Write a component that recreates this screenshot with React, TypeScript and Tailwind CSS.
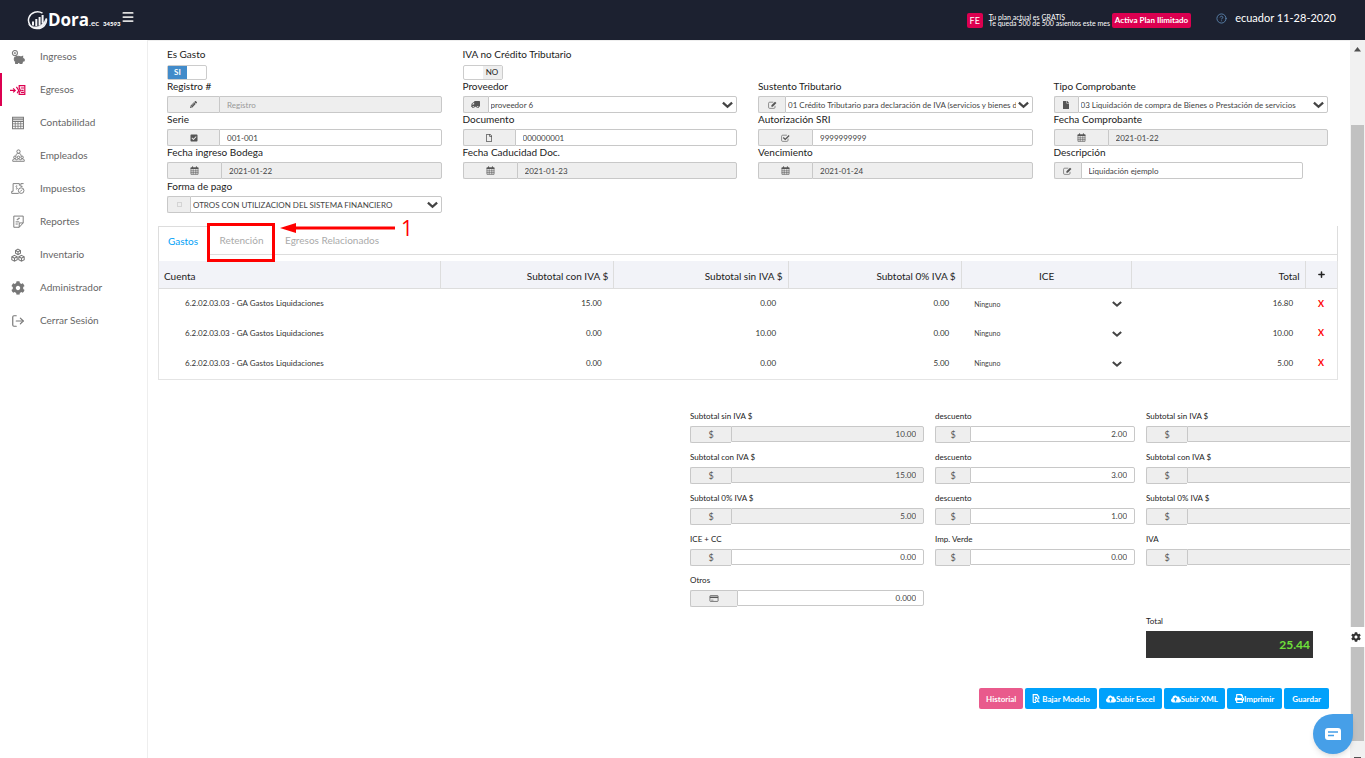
import { useState, type ReactNode } from "react";
import {
  FaCheckSquare,
  FaCloudUploadAlt,
  FaCog,
  FaFile,
  FaPencilAlt,
  FaPrint,
  FaRegFile,
  FaTruck,
} from "react-icons/fa";
import { CircleHelp, LogOut, Menu, Plus } from "lucide-react";

const svgLine = {
  viewBox: "0 0 18 18",
  fill: "none",
  stroke: "currentColor",
  strokeWidth: 1.3,
} as const;

/* ---------- Icons ---------- */

function LogoMark() {
  return (
    <svg viewBox="0 0 22 20" className="w-[22px] h-5 shrink-0" fill="none" stroke="#f4f5f7">
      <path d="M16.5 3.2A9 8.4 0 1 0 20.3 8.5" strokeWidth="1.5" />
      <path d="M2.5 14.5C7 18.5 16 18 20 8.5 20.5 15 15.500 18.600 11 18.600 7 18.600 4 17 2.500 14.500Z" fill="#f4f5f7" strokeWidth="0.500" />
      <path d="M7 15.500v-4M10.300 16V9M13.600 15.500V7M16.600 13.500V5" strokeWidth="2" />
    </svg>
  );
}

function CalendarIcon() {
  return (
    <svg viewBox="0 0 14 14" className="w-[9px] h-[9px]" fill="none" stroke="currentColor">
      <path d="M1.500 3h11v10h-11Z" />
      <path d="M1 3.500h12" strokeWidth="2.500" />
      <path d="M4 .5v3M10 .5v3" strokeWidth="1.500" />
      <path d="M5 5v8M9 5v8M1 7.500h12M1 10.300h12" strokeWidth="0.900" />
    </svg>
  );
}

function EditIcon() {
  return (
    <svg viewBox="0 0 16 14" className="w-[9px] h-2" fill="none" stroke="currentColor" strokeWidth="1.1">
      <path d="M12.500 8.500V11a2 2 0 0 1-2 2H3a2 2 0 0 1-2-2V4a2 2 0 0 1 2-2h6.500" />
      <path d="M6 10V7.500L12.500 1 15 3.500 8.500 10Z" fill="currentColor" stroke="none" />
    </svg>
  );
}

function CheckIcon() {
  return (
    <svg viewBox="0 0 16 14" className="w-[9px] h-2" fill="none" stroke="currentColor" strokeWidth="1.1">
      <path d="M12.500 8V11a2 2 0 0 1-2 2H3a2 2 0 0 1-2-2V4a2 2 0 0 1 2-2h7.500" />
      <path d="M4 6l3.500 3.500L14.500 2.500" strokeWidth="2.200" />
    </svg>
  );
}

function CardIcon() {
  return (
    <svg viewBox="0 0 16 12" className="w-[10px] h-[7px]" fill="none" stroke="currentColor" strokeWidth="1.3">
      <rect x="1" y="1" width="14" height="10" rx="1" />
      <path d="M1 4h14" strokeWidth="2.500" />
      <path d="M3 8.800h4" strokeWidth="1" />
    </svg>
  );
}

function SquareIcon() {
  return <span className="w-[5px] h-[5px] border border-[#d4d4d4]" />;
}

function PiggyIcon() {
  return (
    <svg {...svgLine} className="w-[14px] h-[14px]">
      <circle cx="5" cy="4" r="3.300" />
      <path d="M5 2.500v3M3.500 4h3" strokeWidth="1" />
      <path d="M5 9.500C7 8 11 8 13 9l2-1v2.500l2 1.500v2l-2 .5-1 3h-2.500V16h-3v1.500H6l-.5-3C4 13 4 11 5 9.500Z" fill="currentColor" />
    </svg>
  );
}

function ExpenseIcon() {
  return (
    <svg viewBox="0 0 20 16" className="w-4 h-[14px]" fill="none" stroke="currentColor" strokeWidth="1.500">
      <path d="M0 8.500h6M4 6l2.500 2.500L4 11M8 4l3 4.500L9 12" />
      <path d="M11.500 2.500h7v11h-7V11l1.500-2.500-1.500-3Z" />
      <path d="M13.500 5.500h4M14 8.500h3M13.500 11h4" />
    </svg>
  );
}

function CalculatorIcon() {
  return (
    <svg {...svgLine} className="w-[14px] h-[14px]">
      <path d="M2 1.500h14v15H2Z" />
      <path d="M2 4h14M2 6.800h14" strokeWidth="1.600" />
      <path d="M5.500 7v9M9 7v9M12.500 7v9M2 10h14M2 13.200h14" strokeWidth="1" />
    </svg>
  );
}

function PeopleIcon() {
  return (
    <svg {...svgLine} className="w-[13px] h-[13px]">
      <circle cx="9" cy="3.500" r="2.300" />
      <path d="M5.500 10V8.500c0-3 7-3 7 0V10" />
      <circle cx="4" cy="11.500" r="1.700" />
      <circle cx="9" cy="11.500" r="1.700" />
      <circle cx="14" cy="11.500" r="1.700" />
      <path d="M1 17v-1.500c0-2.500 5-2.500 5.300 0 .4-2.500 5-2.500 5.400 0 .3-2.500 5.300-2.500 5.300 0V17Z" />
    </svg>
  );
}

function TaxIcon() {
  return (
    <svg {...svgLine} viewBox="0 0 20 18" className="w-[14px] h-[13px]">
      <path d="M3 13V2h9M3 13H1v3h10M12 2v3" />
      <path d="M9 5.500C6.500 4.500 6.500 7 8 7.500s1.500 3-1 2" />
      <path d="M18 2h-4v4h2.500" />
      <circle cx="14.500" cy="12" r="4" />
      <path d="M13 13.500l3-3" />
    </svg>
  );
}

function ReportIcon() {
  return (
    <svg {...svgLine} className="w-[13px] h-[13px]">
      <path d="M10 17H2.500V1.500h13V11ZM10 17v-6h5.500" />
      <path d="M11 4.500H8.500v2h-2M5 9.500h5M5 12.500h3" />
    </svg>
  );
}

function BoxesIcon() {
  return (
    <svg {...svgLine} className="w-[14px] h-[14px]">
      <path d="M9 1.500l3.200 1.700v3.600L9 8.500 5.800 6.800V3.200ZM5.800 3.200 9 5l3.200-1.800M9 5v3.500" />
      <path d="M4.500 9.500l3.500 1.700V15l-3.500 2L1 15v-3.800ZM1 11.200l3.500 2L8 11.200M4.500 13.200V17" />
      <path d="M13.500 9.500l3.500 1.700V15l-3.500 2-3.500-2v-3.800ZM10 11.200l3.500 2 3.500-2M13.500 13.200V17" />
    </svg>
  );
}

function ModelIcon() {
  return (
    <svg viewBox="0 0 14 16" className="w-2 h-[9px]" fill="none" stroke="currentColor" strokeWidth="2">
      <path d="M2 15V1h7l3 4v4M5 6h4M2 15h5" />
      <circle cx="8" cy="10.500" r="2.500" />
      <path d="M10 12.500l3 2.500" />
    </svg>
  );
}

function Chevron({ className }: { className: string }) {
  return (
    <svg viewBox="0 0 12 8" className={`pointer-events-none absolute top-1/2 -translate-y-1/2 ${className}`} fill="none" stroke="#444" strokeWidth="2.500">
      <path d="M1 1.500l5 4.500 5-4.500" />
    </svg>
  );
}

/* ---------- Data ---------- */

const nav = [
  { label: "Ingresos", icon: <PiggyIcon /> },
  { label: "Egresos", icon: <ExpenseIcon /> },
  { label: "Contabilidad", icon: <CalculatorIcon /> },
  { label: "Empleados", icon: <PeopleIcon /> },
  { label: "Impuestos", icon: <TaxIcon /> },
  { label: "Reportes", icon: <ReportIcon /> },
  { label: "Inventario", icon: <BoxesIcon /> },
  { label: "Administrador", icon: <FaCog size={14} /> },
  { label: "Cerrar Sesión", icon: <LogOut size={14} strokeWidth={2} /> },
];

const rows = [
  { con: "15.00", sin: "0.00", cero: "0.00", total: "16.80" },
  { con: "0.00", sin: "10.00", cero: "0.00", total: "10.00" },
  { con: "0.00", sin: "0.00", cero: "5.00", total: "5.00" },
];

const totals = [
  { left: "Subtotal sin IVA $", value: "10.00", mid: "descuento", midValue: "2.00", right: "Subtotal sin IVA $", locked: true },
  { left: "Subtotal con IVA $", value: "15.00", mid: "descuento", midValue: "3.00", right: "Subtotal con IVA $", locked: true },
  { left: "Subtotal 0% IVA $", value: "5.00", mid: "descuento", midValue: "1.00", right: "Subtotal 0% IVA $", locked: true },
  { left: "ICE + CC", value: "0.00", mid: "Imp. Verde", midValue: "0.00", right: "IVA", locked: false },
];

/* ---------- Form pieces ---------- */

type FieldProps = {
  id: string;
  label: string;
  icon: ReactNode;
  addon: string;
  value?: string;
  placeholder?: string;
  locked?: boolean;
  select?: boolean;
  width?: string;
};

function Field({ id, label, icon, addon, value, placeholder, locked, select, width = "w-full" }: FieldProps) {
  return (
    <div className="pl-[10px] pr-[11px] min-w-0">
      <label htmlFor={id} className="block h-4 text-[10px] leading-3 text-[#222]">{label}</label>
      <div className={`flex h-[17px] ${width}`}>
        <span className={`flex items-center justify-center shrink-0 border border-r-0 border-[#c8c8c8] rounded-l-xs bg-[#eee] text-[#555] ${addon}`}>
          {icon}
        </span>
        {select ? (
          <div className="relative flex-1 min-w-0">
            <select id={id} className="block w-full h-full appearance-none border border-[#c8c8c8] rounded-r-xs bg-white pl-[2px] pr-4 text-[8px] leading-[14px] text-[#444]">
              <option>{value}</option>
            </select>
            <Chevron className="right-1 w-[11px] h-2" />
          </div>
        ) : (
          <input
            id={id}
            defaultValue={value}
            placeholder={placeholder}
            readOnly={locked}
            className={`flex-1 min-w-0 border border-[#c8c8c8] rounded-r-xs px-[7px] text-[8px] text-[#444] placeholder:text-[#999] ${locked ? "bg-[#eee]" : "bg-white"}`}
          />
        )}
      </div>
    </div>
  );
}

function Amount({ id, label, value, locked, addon, icon = "$" }: { id: string; label: string; value?: string; locked?: boolean; addon: string; icon?: ReactNode }) {
  return (
    <div className="h-[41px] min-w-0">
      <label htmlFor={id} className="block h-4 text-[8px] leading-3 text-[#222]">{label}</label>
      <div className="flex h-[17px]">
        <span className={`flex items-center justify-center shrink-0 border border-r-0 border-[#c8c8c8] rounded-l-xs bg-[#eee] text-[9px] text-[#555] ${addon}`}>
          {icon}
        </span>
        <input
          id={id}
          defaultValue={value}
          readOnly={locked}
          className={`flex-1 min-w-0 h-4 border border-[#c8c8c8] rounded-r-xs px-[7px] text-right text-[8px] text-[#444] ${locked ? "bg-[#eee]" : "bg-white"}`}
        />
      </div>
    </div>
  );
}

function Toggle({ id, label, initial }: { id: string; label: string; initial: boolean }) {
  const [on, setOn] = useState(initial);
  return (
    <div className="pl-[10px] pr-[11px]">
      <label htmlFor={id} className="block h-4 text-[10px] leading-3 text-[#222]">{label}</label>
      <button
        id={id}
        type="button"
        role="switch"
        aria-checked={on}
        onClick={() => setOn(!on)}
        className="mt-px flex w-10 h-[15px] border border-[#ccc] rounded-xs bg-white text-[8px] leading-[13px]"
      >
        {on && <span className="w-[19px] bg-[#428bca] font-bold text-white">SI</span>}
        {!on && <span className="ml-auto w-[19px] bg-[#eee] text-[#222]">NO</span>}
      </button>
    </div>
  );
}

/* ---------- Layout ---------- */

function Header() {
  return (
    <header className="flex items-center h-10 shrink-0 bg-[#1c2130] text-white pl-[26px] pr-[29px]">
      <LogoMark />
      <div className="flex items-baseline">
        <span className="text-[17px] leading-5 font-bold font-['Open_Sans',sans-serif]">Dora</span>
        <span className="text-[8px] font-semibold">.ec</span>
        <span className="ml-1 text-[6px] font-black">34593</span>
      </div>
      <button type="button" aria-label="Menú" className="pb-[7px]">
        <Menu size={14} strokeWidth={3} className="text-[#ddd]" />
      </button>
      <div className="ml-auto flex items-center">
        <span className="h-[15px] px-[3px] rounded-xs bg-[#dc0050] text-[9px] leading-[15px]">FE</span>
        <p className="ml-[6px] w-[123px] text-[7px] leading-[6px]">
          Tu plan actual es GRATIS
          <br />
          Te queda 500 de 500 asientos este mes
        </p>
        <button type="button" className="h-[15px] px-[3px] rounded-xs bg-[#dc0050] text-[8px] leading-[15px] font-bold">
          Activa Plan Ilimitado
        </button>
        <div className="ml-[25px] mb-1 flex items-center gap-2">
          <CircleHelp size={11} className="text-[#5b83ad]" />
          <span className="text-[11px]">ecuador 11-28-2020</span>
        </div>
      </div>
    </header>
  );
}

function Sidebar() {
  return (
    <aside className="w-[148px] shrink-0 border-r border-[#eee] bg-white">
      <nav>
        {nav.map(({ label, icon }) => {
          const active = label === "Egresos";
          return (
            <a
              key={label}
              href="#"
              className={`flex items-center h-[33px] border-l-2 text-[10px] text-[#666] ${active ? "border-[#dc0050]" : "border-transparent"}`}
            >
              <span className={`flex justify-center w-8 mr-[6px] ${active ? "text-[#dc0050]" : "text-[#777]"}`}>{icon}</span>
              {label}
            </a>
          );
        })}
      </nav>
    </aside>
  );
}

function Tabs() {
  return (
    <div className="relative mx-[1px] flex h-[35px] border-x border-[#ddd] text-[10px]" role="tablist">
      <div className="flex flex-1 h-[29px] border-b border-[#ddd]">
        <button type="button" role="tab" aria-selected="true" className="-mb-px w-[49px] border-t border-r border-[#ddd] bg-white text-[#00a1f7]">
          Gastos
        </button>
        <button type="button" role="tab" className="w-[67px] text-[#aaa]">Retención</button>
        <button type="button" role="tab" className="px-[10px] text-[#aaa]">Egresos Relacionados</button>
      </div>

      {/* Step marker over the tab */}
      <div className="pointer-events-none absolute left-[48px] -top-[3px] w-[68px] h-[39px] border-[3px] border-[#f00]" />
      <svg viewBox="0 0 118 10" className="absolute left-[121px] -top-[3px] w-[118px] h-[10px]" fill="#f00">
        <path d="M0 5 16 0v3.500h99v3H16V10Z" />
      </svg>
      <span className="absolute left-[242px] -top-3 text-[21px] leading-7 text-[#f00] font-['Open_Sans',sans-serif]">1</span>
    </div>
  );
}

function ExpensesTable() {
  const th = "h-[27px] border-r border-[#ddd] px-[5px] pt-1 font-normal";
  return (
    <div className="mx-[1px] border border-t-0 border-[#e4e4e4] pb-px">
      <table className="w-full table-fixed border-collapse text-[8px] text-[#333]">
        <colgroup>
          <col className="w-[23.9%]" />
          <col className="w-[14.7%]" />
          <col className="w-[14.8%]" />
          <col className="w-[14.7%]" />
          <col className="w-[14.5%]" />
          <col className="w-[14.7%]" />
          <col className="w-[2.7%]" />
        </colgroup>
        <thead className="border-b border-[#ddd] bg-[#f2f3f8] text-[10px] text-[#222]">
          <tr>
            <th className={`${th} text-left`}>Cuenta</th>
            <th className={`${th} text-right`}>Subtotal con IVA $</th>
            <th className={`${th} text-right`}>Subtotal sin IVA $</th>
            <th className={`${th} text-right`}>Subtotal 0% IVA $</th>
            <th className={`${th} text-center`}>ICE</th>
            <th className={`${th} text-right`}>Total</th>
            <th className="p-0">
              <button type="button" aria-label="Agregar fila" className="block mx-auto">
                <Plus size={9} strokeWidth={4} />
              </button>
            </th>
          </tr>
        </thead>
        <tbody>
          {rows.map((row, i) => (
            <tr key={i} className="h-[30px]">
              <td className="pl-[26px]">6.2.02.03.03 - GA Gastos Liquidaciones</td>
              <td className="pr-3 text-right">{row.con}</td>
              <td className="pr-3 text-right">{row.sin}</td>
              <td className="pr-3 text-right">{row.cero}</td>
              <td className="pl-[13px] pr-[10px] pt-px">
                <div className="relative">
                  <select aria-label="ICE" className="block w-full appearance-none text-[7px] text-[#444]">
                    <option>Ninguno</option>
                  </select>
                  <Chevron className="right-0 w-[10px] h-[7px]" />
                </div>
              </td>
              <td className="pr-3 text-right">{row.total}</td>
              <td className="text-center">
                <button type="button" aria-label="Eliminar fila" className="text-[9px] font-bold text-[#f00]">X</button>
              </td>
            </tr>
          ))}
        </tbody>
      </table>
    </div>
  );
}

function Totals() {
  return (
    <div className="ml-[45.1%] mt-[30px] w-[57.4%]">
      <div className="grid grid-cols-[234fr_200fr_234fr] gap-x-[11px]">
        {totals.map((t, i) => (
          <div key={i} className="contents">
            <Amount id={`left-${i}`} label={t.left} value={t.value} locked={t.locked} addon="w-[41px]" />
            <Amount id={`mid-${i}`} label={t.mid} value={t.midValue} addon="w-[35px]" />
            <Amount id={`right-${i}`} label={t.right} locked addon="w-[41px]" />
          </div>
        ))}
        <Amount id="otros" label="Otros" value="0.000" addon="w-[47px]" icon={<CardIcon />} />
        <div className="col-start-3 row-start-6">
          <label htmlFor="total" className="block h-4 text-[8px] leading-3 text-[#222]">Total</label>
          <input
            id="total"
            readOnly
            defaultValue="25.44"
            className="block w-[167px] h-[27px] bg-[#333] px-[3px] text-right text-[12px] font-bold text-[#6fe03a]"
          />
        </div>
      </div>
    </div>
  );
}

function Actions() {
  const btn = "flex items-center h-[21px] rounded-xs bg-[#00a1fb] font-bold";
  return (
    <div className="flex justify-end gap-[2px] mt-[30px] pr-[21px] text-[8px] text-white">
      <button type="button" className={`${btn} bg-[#e95a8c] px-[7px]`}>Historial</button>
      <button type="button" className={`${btn} gap-[2px] px-[7px]`}><ModelIcon />Bajar Modelo</button>
      <button type="button" className={`${btn} px-[7px]`}><FaCloudUploadAlt size={10} />Subir Excel</button>
      <button type="button" className={`${btn} px-[7px]`}><FaCloudUploadAlt size={10} />Subir XML</button>
      <button type="button" className={`${btn} px-2`}><FaPrint size={9} />Imprimir</button>
      <button type="button" className={`${btn} px-2`}>Guardar</button>
    </div>
  );
}

function ScrollRail() {
  return (
    <div className="flex flex-col w-[15px] shrink-0 bg-[#f1f1f1]" aria-hidden="true">
      <svg viewBox="0 0 15 20" className="w-[15px] h-5" fill="#505050">
        <path d="M7.500 7 11 11.500H4Z" />
      </svg>
      <div className="h-[9%] shrink-0" />
      <div className="mx-px flex-1 bg-[#c1c1c1]" />
      <div className="flex items-end justify-center h-[17px]">
        <span className="w-[7px] h-px bg-[#505050]" />
      </div>
    </div>
  );
}

export default function App() {
  return (
    <div className="relative flex flex-col h-screen overflow-hidden bg-white font-[Lato,sans-serif]">
      <Header />
      <div className="flex flex-1 min-h-0">
        <Sidebar />
        <main className="flex-1 min-w-0 overflow-hidden border-t border-[#eee] pt-[7px]">
          <div className="pl-[9px] pr-[11px]">
            <div className="grid grid-cols-4">
              <Toggle id="es-gasto" label="Es Gasto" initial />
              <Toggle id="iva-credito" label="IVA no Crédito Tributario" initial={false} />
            </div>
            <div className="grid grid-cols-4">
              <Field id="registro" label="Registro #" icon={<FaPencilAlt size={7} />} addon="w-[52px]" placeholder="Registro" locked />
              <Field id="proveedor" label="Proveedor" icon={<FaTruck size={9} className="-scale-x-100" />} addon="w-[25px]" value="proveedor 6" select />
              <Field id="sustento" label="Sustento Tributario" icon={<EditIcon />} addon="w-[27px]" value="01 Crédito Tributario para declaración de IVA (servicios y bienes distintos)" select />
              <Field id="tipo" label="Tipo Comprobante" icon={<FaFile size={8} />} addon="w-[24px]" value="03 Liquidación de compra de Bienes o Prestación de servicios" select />
              <Field id="serie" label="Serie" icon={<FaCheckSquare size={8} />} addon="w-[52px]" value="001-001" />
              <Field id="documento" label="Documento" icon={<FaRegFile size={8} />} addon="w-[52px]" value="000000001" />
              <Field id="autorizacion" label="Autorización SRI" icon={<CheckIcon />} addon="w-[54px]" value="9999999999" />
              <Field id="fecha" label="Fecha Comprobante" icon={<CalendarIcon />} addon="w-[54px]" value="2021-01-22" locked />
            </div>
            <div className="grid grid-cols-4 gap-y-px">
              <Field id="bodega" label="Fecha ingreso Bodega" icon={<CalendarIcon />} addon="w-[54px]" value="2021-01-22" locked />
              <Field id="caducidad" label="Fecha Caducidad Doc." icon={<CalendarIcon />} addon="w-[54px]" value="2021-01-23" locked />
              <Field id="vencimiento" label="Vencimiento" icon={<CalendarIcon />} addon="w-[54px]" value="2021-01-24" locked />
              <Field id="descripcion" label="Descripción" icon={<EditIcon />} addon="w-[27px]" value="Liquidación ejemplo" width="w-[91%]" />
              <Field id="pago" label="Forma de pago" icon={<SquareIcon />} addon="w-[23px]" value="OTROS CON UTILIZACION DEL SISTEMA FINANCIERO" select />
            </div>
            <div className="h-[13px]" />
            <Tabs />
            <ExpensesTable />
          </div>
          <Totals />
          <Actions />
        </main>
        <ScrollRail />
      </div>

      {/* Floating controls */}
      <button type="button" aria-label="Configuración" className="absolute right-0 bottom-[111px] flex items-center justify-center w-[19px] h-5 rounded-l-xs bg-white text-[#333]">
        <FaCog size={10} />
      </button>
      <button type="button" aria-label="Chat" className="absolute right-3 bottom-1 flex items-center justify-center w-10 h-10 rounded-full rounded-tr-xs bg-[#469fe8] shadow-md">
        <svg viewBox="0 0 16 12" className="w-4 h-3">
          <path d="M3 0h10a3 3 0 0 1 3 3v9H3a3 3 0 0 1-3-3V3a3 3 0 0 1 3-3Z" fill="#fff" />
          <path d="M3 4h10M3 7.500h6" stroke="#469fe8" strokeWidth="1.300" />
        </svg>
      </button>
    </div>
  );
}
